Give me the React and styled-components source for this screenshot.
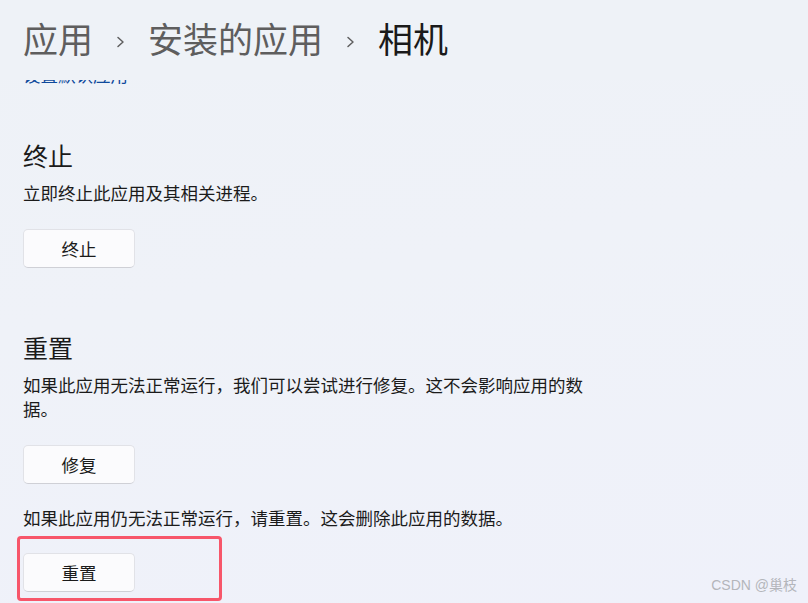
import React from 'react';
import styled, { createGlobalStyle } from 'styled-components';

const GlobalStyle = createGlobalStyle`
  html, body {
    margin: 0;
    padding: 0;
    height: 100%;
  }
  body {
    font-family: "Noto Sans CJK SC", "Noto Sans", sans-serif;
    color: #1b1b1b;
  }
`;

const Page = styled.div`
  position: relative;
  width: 808px;
  height: 603px;
  overflow: hidden;
  background: linear-gradient(170deg, #eef2f7 0%, #eff2f8 45%, #eff1fa 100%);
  display: flex;
  flex-direction: column;
`;

const Header = styled.header`
  flex: none;
  display: flex;
  align-items: center;
  gap: 23px;
  height: 80px;
  padding: 0 0 0 23px;
  box-sizing: border-box;
  position: relative;
  z-index: 1;
  background: #eef2f7;
`;

const Crumb = styled.span`
  font-size: 35px;
  line-height: 48px;
  margin-top: -5px;
  color: ${(p) => (p.$current ? '#1a1a1a' : '#5e5e5e')};
  white-space: nowrap;
`;

const ChevronIcon = styled.svg`
  flex: none;
  width: 9px;
  height: 12px;
  margin-top: 4px;
`;

const Chevron = () => (
  <ChevronIcon viewBox="0 0 9 12">
    <path d="M2 1.5 L7 6 L2 10.5" fill="none" stroke="#5f5f5f" strokeWidth="1.5" strokeLinecap="round" strokeLinejoin="round" />
  </ChevronIcon>
);

const Content = styled.main`
  flex: 1;
  padding: 0 0 0 23px;
  overflow: hidden;
`;

const Link = styled.a`
  display: block;
  margin-top: -17px;
  font-size: 17.5px;
  line-height: 24px;
  color: #0f4a9c;
  text-decoration: none;
`;

const Section = styled.section`
  display: flex;
  flex-direction: column;
  align-items: flex-start;
  padding-top: ${(p) => p.$top}px;
`;

const Heading = styled.h2`
  margin: 0;
  font-size: 25px;
  font-weight: 400;
  line-height: 34px;
  color: #1a1a1a;
`;

const Desc = styled.p`
  margin: ${(p) => p.$top || 0}px 0 0;
  max-width: 585px;
  font-size: 17.5px;
  line-height: 24px;
  color: #1b1b1b;
`;

const Button = styled.button`
  margin-top: ${(p) => p.$top || 0}px;
  width: 112px;
  height: 39px;
  border: 1px solid #e1e2e7;
  border-bottom-color: #cfd0d6;
  border-radius: 5px;
  background: #fbfbfd;
  font-family: inherit;
  font-size: 17.5px;
  color: #1b1b1b;
  padding: 0;
  cursor: pointer;
`;

const Highlight = styled.div`
  margin: 6px 0 0 -6px;
  width: 205px;
  box-sizing: border-box;
  padding: 14px 3px 6px;
  border: 3px solid #f7566a;
  border-radius: 4px;
`;

const Watermark = styled.div`
  position: absolute;
  right: 11px;
  bottom: 8px;
  font-size: 14px;
  line-height: 20px;
  color: #b4b6bb;
  font-family: "Liberation Sans", "Noto Sans CJK SC", sans-serif;
`;

export default function App() {
  return (
    <>
      <GlobalStyle />
      <Page>
        <Header>
          <Crumb>应用</Crumb>
          <Chevron />
          <Crumb>安装的应用</Crumb>
          <Chevron />
          <Crumb $current>相机</Crumb>
        </Header>
        <Content>
          <Link href="#">设置默认应用</Link>
          <Section $top={51}>
            <Heading>终止</Heading>
            <Desc $top={9}>立即终止此应用及其相关进程。</Desc>
            <Button $top={24}>终止</Button>
          </Section>
          <Section $top={62}>
            <Heading>重置</Heading>
            <Desc $top={9}>如果此应用无法正常运行，我们可以尝试进行修复。这不会影响应用的数据。</Desc>
            <Button $top={24}>修复</Button>
            <Desc $top={22}>如果此应用仍无法正常运行，请重置。这会删除此应用的数据。</Desc>
            <Highlight>
              <Button>重置</Button>
            </Highlight>
          </Section>
        </Content>
        <Watermark>CSDN @巢枝</Watermark>
      </Page>
    </>
  );
}
